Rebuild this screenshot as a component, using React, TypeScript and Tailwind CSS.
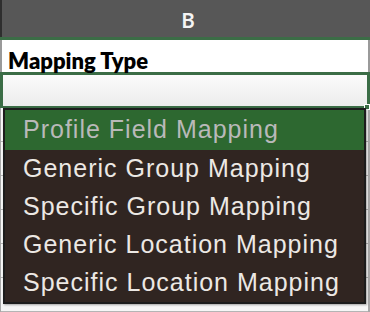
const options = [
  "Profile Field Mapping",
  "Generic Group Mapping",
  "Specific Group Mapping",
  "Generic Location Mapping",
  "Specific Location Mapping",
]

export default function App() {
  return (
    <div className="relative w-[370px] h-[312px] overflow-hidden bg-[#f3f3f3]">
      {/* column header */}
      <div className="h-[37px] bg-[#575757] border-l-[2px] border-[#2e2e2e] flex items-center justify-center">
        <span className="text-[#f4f4f4] text-[20px] font-bold font-['Lato','Liberation_Sans',sans-serif] ml-[4px] mt-[2px]">B</span>
      </div>
      <div className="h-[3px] bg-[#3b6d46]" />

      {/* header cell */}
      <div className="h-[32px] bg-white border-l-[2px] border-r-[2px] border-[#9a9a9a] flex items-end pl-[6px]">
        <span className="text-black text-[22px] font-extrabold leading-none font-['Lato','Liberation_Sans',sans-serif] pb-[0px]">Mapping Type</span>
      </div>
      <div className="h-[3px] bg-[#3b6d46]" />

      {/* active cell */}
      <div className="h-[33px] border-l-[3px] border-r-[3px] border-b-[2px] border-[#3b6d46] bg-gradient-to-b from-[#fbfbfb] to-[#ececec]" />

      {/* sheet rows behind the list */}
      <div className="flex flex-col border-l-[1px] border-r-[2px] border-[#a8a8a8]">
        {[0, 1, 2, 3, 4, 5].map((r) => (
          <div key={r} className="h-[34px] border-b border-[#b4b4b4] bg-[#f6f6f6]" />
        ))}
      </div>

      {/* fill handle */}
      <div className="absolute left-[364px] top-[104px] w-[6px] h-[6px] bg-[#3b6d46] border border-white" />

      {/* dropdown list */}
      <div className="absolute left-[3px] top-[108px] w-[363px] h-[196px] bg-[#302521] border-[2px] border-[#1c1c1c] flex flex-col font-['Liberation_Sans','Helvetica',sans-serif] shadow-[1px_1px_2px_rgba(0,0,0,0.35)]">
        {options.map((o, i) => (
          <div
            key={o}
            className={
              i === 0
                ? "h-[40px] bg-[#2d6830] text-[#b9b9b9] flex items-center pl-[18px] text-[25px] tracking-[1px]"
                : "h-[38px] text-[#ece8e4] flex items-center pl-[18px] text-[25px] tracking-[1px]"
            }
          >
            {o}
          </div>
        ))}
      </div>
    </div>
  )
}
